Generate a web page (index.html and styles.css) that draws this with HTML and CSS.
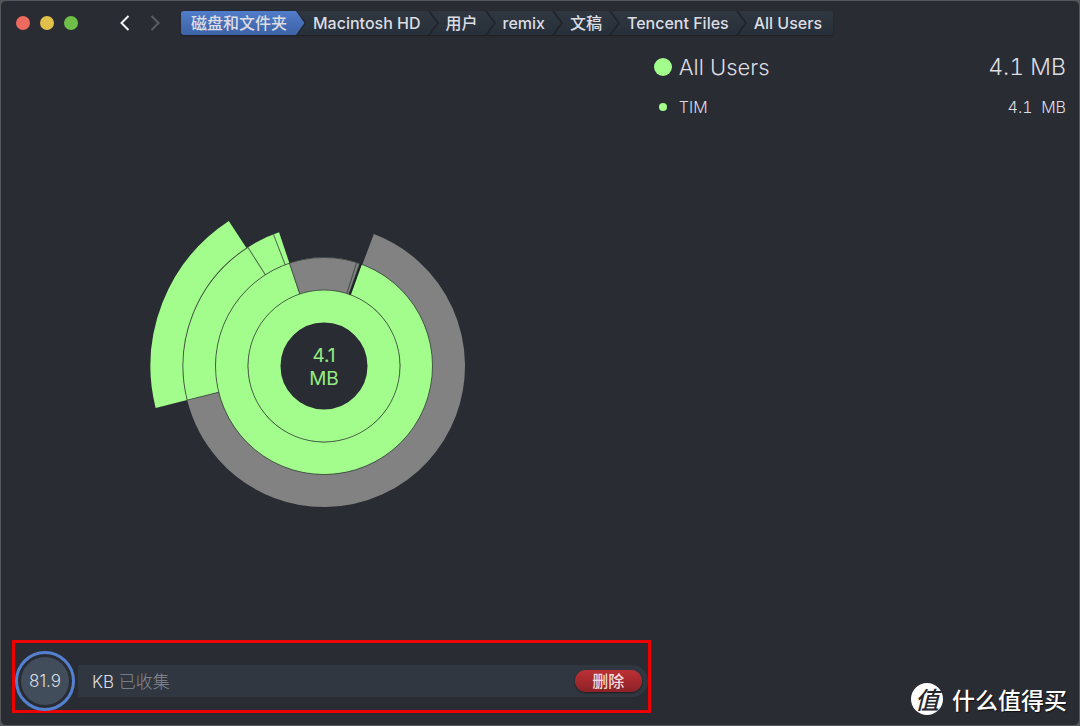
FILE: index.html
```html
<!DOCTYPE html>
<html lang="zh-CN">
<head>
<meta charset="utf-8">
<title>All Users</title>
<link rel="stylesheet" href="styles.css">
</head>
<body>
<div class="window">
  <header class="toolbar">
    <div class="lights">
      <button class="light light-close" aria-label="关闭"></button>
      <button class="light light-min" aria-label="最小化"></button>
      <button class="light light-zoom" aria-label="缩放"></button>
    </div>
    <div class="history">
      <button class="nav-button" aria-label="后退"><svg width="10" height="16" viewBox="0 0 10 16"><path d="M8.500 1L1.500 8L8.500 15"/></svg></button>
      <button class="nav-button nav-off" aria-label="前进"><svg width="10" height="16" viewBox="0 0 10 16"><path d="M1.500 1L8.500 8L1.500 15"/></svg></button>
    </div>
    <nav class="crumbs">
      <a class="crumb crumb-root" href="#">磁盘和文件夹</a>
      <svg class="sep" width="11" height="24" viewBox="0 0 11 24">
        <defs><linearGradient id="blue" x1="0" y1="0" x2="0" y2="1"><stop offset="0" stop-color="#507cca"/><stop offset="1" stop-color="#3d62a6"/></linearGradient></defs>
        <path class="sep-line" d="M1 0L10 12L1 24"/><path fill="url(#blue)" d="M0 0H1L9.500 12L1 24H0Z"/>
      </svg>
      <a class="crumb" href="#">Macintosh HD</a>
      <svg class="sep" width="11" height="24" viewBox="0 0 11 24"><path class="sep-line" d="M1 0L10 12L1 24"/></svg>
      <a class="crumb" href="#">用户</a>
      <svg class="sep" width="11" height="24" viewBox="0 0 11 24"><path class="sep-line" d="M1 0L10 12L1 24"/></svg>
      <a class="crumb" href="#">remix</a>
      <svg class="sep" width="11" height="24" viewBox="0 0 11 24"><path class="sep-line" d="M1 0L10 12L1 24"/></svg>
      <a class="crumb" href="#">文稿</a>
      <svg class="sep" width="11" height="24" viewBox="0 0 11 24"><path class="sep-line" d="M1 0L10 12L1 24"/></svg>
      <a class="crumb" href="#">Tencent Files</a>
      <svg class="sep" width="11" height="24" viewBox="0 0 11 24"><path class="sep-line" d="M1 0L10 12L1 24"/></svg>
      <a class="crumb crumb-last" href="#">All Users</a>
    </nav>
  </header>

  <main class="content">
    <section class="map">
      <div class="chart-area">
        <svg class="chart" width="360" height="360" viewBox="-180 -180 360 360" role="img" aria-label="4.1 MB">
          <g fill="none" stroke-width="32.5">
            <circle class="green" r="157.250" pathLength="360" stroke-dasharray="70.700 289.300" transform="rotate(166)"/>
            <circle class="grey" r="124.750" pathLength="360" stroke-dasharray="235.300 124.700" transform="rotate(-69.300)"/>
            <circle class="green" r="124.750" pathLength="360" stroke-dasharray="85.400 274.600" transform="rotate(166)"/>
            <circle class="green" r="92.250" pathLength="360" stroke-dasharray="321.100 38.900" transform="rotate(-69.700)"/>
            <circle class="grey" r="92.250" pathLength="360" stroke-dasharray="38 322" transform="rotate(-108.600)"/>
            <circle class="green" r="59.750"/>
          </g>
          <g class="edges">
            <circle r="76"/>
            <circle r="108.500"/>
            <circle r="141" pathLength="360" stroke-dasharray="71 289" transform="rotate(166)"/>
            <path d="M0-108.500V-141" transform="rotate(-104)"/>
            <path d="M0-108.500V-141" transform="rotate(-32.700)"/>
            <path d="M0-108.500V-141" transform="rotate(-21)"/>
            <path d="M0-76V-108.500" transform="rotate(-18.600)"/>
            <path d="M0-76V-108.500" transform="rotate(17.500)"/>
            <path d="M0-76V-108.500" transform="rotate(19.200)"/>
          </g>
          <path class="gap" d="M0-76V-109" transform="rotate(19.900)"/>
          <text class="total" text-anchor="middle" y="-4">4.1</text>
          <text class="total" text-anchor="middle" y="19">MB</text>
        </svg>
      </div>
      <div class="collector">
        <div class="count"><span class="count-disc">81.9</span></div>
        <div class="tray">
          <span class="tray-text">KB <span class="muted">已收集</span></span>
          <button class="delete">删除</button>
        </div>
      </div>
    </section>

    <aside class="details">
      <div class="row row-main">
        <span class="dot dot-large"></span><span class="name">All Users</span><span class="size">4.1 MB</span>
      </div>
      <div class="row">
        <span class="dot"></span><span class="name">TIM</span><span class="size">4.1&nbsp; MB</span>
      </div>
    </aside>
  </main>

  <div class="brand">
    <span class="brand-mark">值</span>
    <span>什么值得买</span>
  </div>
</div>
</body>
</html>
```

FILE: styles.css
```css
* {
  box-sizing: border-box;
}

body {
  margin: 0;
  background: #55595b;
  color: #dcdde0;
  font-family: Inter, "Noto Sans CJK SC", sans-serif;
}

button {
  padding: 0;
  border: 0;
  background: none;
  color: inherit;
  font: inherit;
}

.window {
  position: relative;
  display: flex;
  flex-direction: column;
  min-height: 100vh;
  border: 1px solid #55595b;
  border-radius: 6px;
  background: #2a2c33;
}

.toolbar {
  display: flex;
  align-items: center;
  height: 44px;
  padding: 0 15px;
}

.lights {
  display: flex;
  gap: 10px;
}

.light {
  width: 14px;
  height: 14px;
  border-radius: 50%;
}

.light-close { background: #ed6a5e; }
.light-min { background: #e3bf4b; }
.light-zoom { background: #6fbe48; }

.history {
  display: flex;
  gap: 20px;
  margin: 0 21px 0 42px;
}

.nav-button {
  display: flex;
}

.nav-button path {
  fill: none;
  stroke: #f2f3f4;
  stroke-width: 2;
}

.nav-off path {
  stroke: #5a5d64;
}

.crumbs {
  display: flex;
  height: 24px;
  border-radius: 3px;
  background: linear-gradient(#303740, #27303a);
  box-shadow: 0 1px 2px #1d1f24;
  font-size: 16px;
  font-weight: 500;
  line-height: 24px;
  white-space: nowrap;
}

.crumb {
  padding: 0 7px;
  color: #dcdde4;
  text-decoration: none;
}

.crumb-root {
  padding: 0 8px 0 10px;
  border-radius: 3px 0 0 3px;
  background: linear-gradient(#507cca, #3d62a6);
}

.crumb-last {
  padding-right: 11px;
}

.sep {
  flex: none;
}

.sep-line {
  fill: none;
  stroke: #22252b;
  stroke-width: 2;
}

.content {
  display: grid;
  flex: 1;
  grid-template-columns: 3fr 2fr;
}

.map {
  display: flex;
  flex-direction: column;
}

.chart-area {
  display: flex;
  flex: 1;
  align-items: center;
  justify-content: center;
  padding-top: 46px;
}

.green { stroke: #a3fd8c; }
.grey { stroke: #828282; }

.edges {
  fill: none;
  stroke: #37453b;
  stroke-opacity: 0.8;
}

.gap {
  stroke: #1f2426;
  stroke-width: 2;
}

.total {
  fill: #94ec82;
  font-size: 19px;
}

.collector {
  display: flex;
  align-items: center;
  height: 73px;
  margin: 0 -3px 12px 11px;
  padding-top: 8px;
  border: 3px solid #ec0000;
}

.count {
  display: flex;
  flex: none;
  align-items: center;
  justify-content: center;
  width: 60px;
  height: 60px;
  border: 3px solid #5480d0;
  border-radius: 50%;
}

.count-disc {
  width: 48px;
  height: 48px;
  border-radius: 50%;
  background: #414d5a;
  font-size: 17px;
  font-weight: 300;
  line-height: 48px;
  text-align: center;
}

.tray {
  display: flex;
  flex: 1;
  align-items: center;
  justify-content: space-between;
  height: 32px;
  margin-left: 3px;
  padding: 0 6px 0 14px;
  border-radius: 0 16px 16px 0;
  background: #303740;
}

.tray-text {
  font-size: 17px;
  font-weight: 300;
}

.muted {
  color: #858a94;
}

.delete {
  width: 67px;
  height: 22px;
  border-radius: 11px;
  background: linear-gradient(#bd3034, #8b2227);
  box-shadow: 0 1px 2px #1c1d22;
  color: #f0dcdf;
  font-size: 16px;
  font-weight: 500;
  line-height: 22px;
}

.details {
  padding: 2px 13px 0 6px;
}

.row {
  display: flex;
  align-items: center;
  height: 40px;
  font-size: 16px;
  font-weight: 300;
}

.row-main {
  font-size: 22px;
}

.row-main .size {
  font-size: 23px;
}

.size {
  font-variant-numeric: tabular-nums;
}

.name {
  flex: 1;
  margin-left: 7px;
}

.dot {
  width: 8px;
  height: 8px;
  margin: 0 5px;
  border-radius: 50%;
  background: #a3fd8c;
}

.dot-large {
  width: 18px;
  height: 18px;
  margin: 0;
}

.brand {
  position: absolute;
  right: 12px;
  bottom: 9px;
  display: flex;
  gap: 9px;
  align-items: center;
  color: #fff;
  font-family: "Noto Sans CJK SC", sans-serif;
  font-size: 23px;
  font-weight: 500;
  line-height: 34px;
  text-shadow: 1px 1px 1px #111;
}

.brand-mark {
  width: 32px;
  height: 32px;
  border-radius: 50%;
  background: #fff;
  color: #25272d;
  font-size: 24px;
  font-style: italic;
  line-height: 32px;
  text-align: center;
  text-shadow: none;
}
```
